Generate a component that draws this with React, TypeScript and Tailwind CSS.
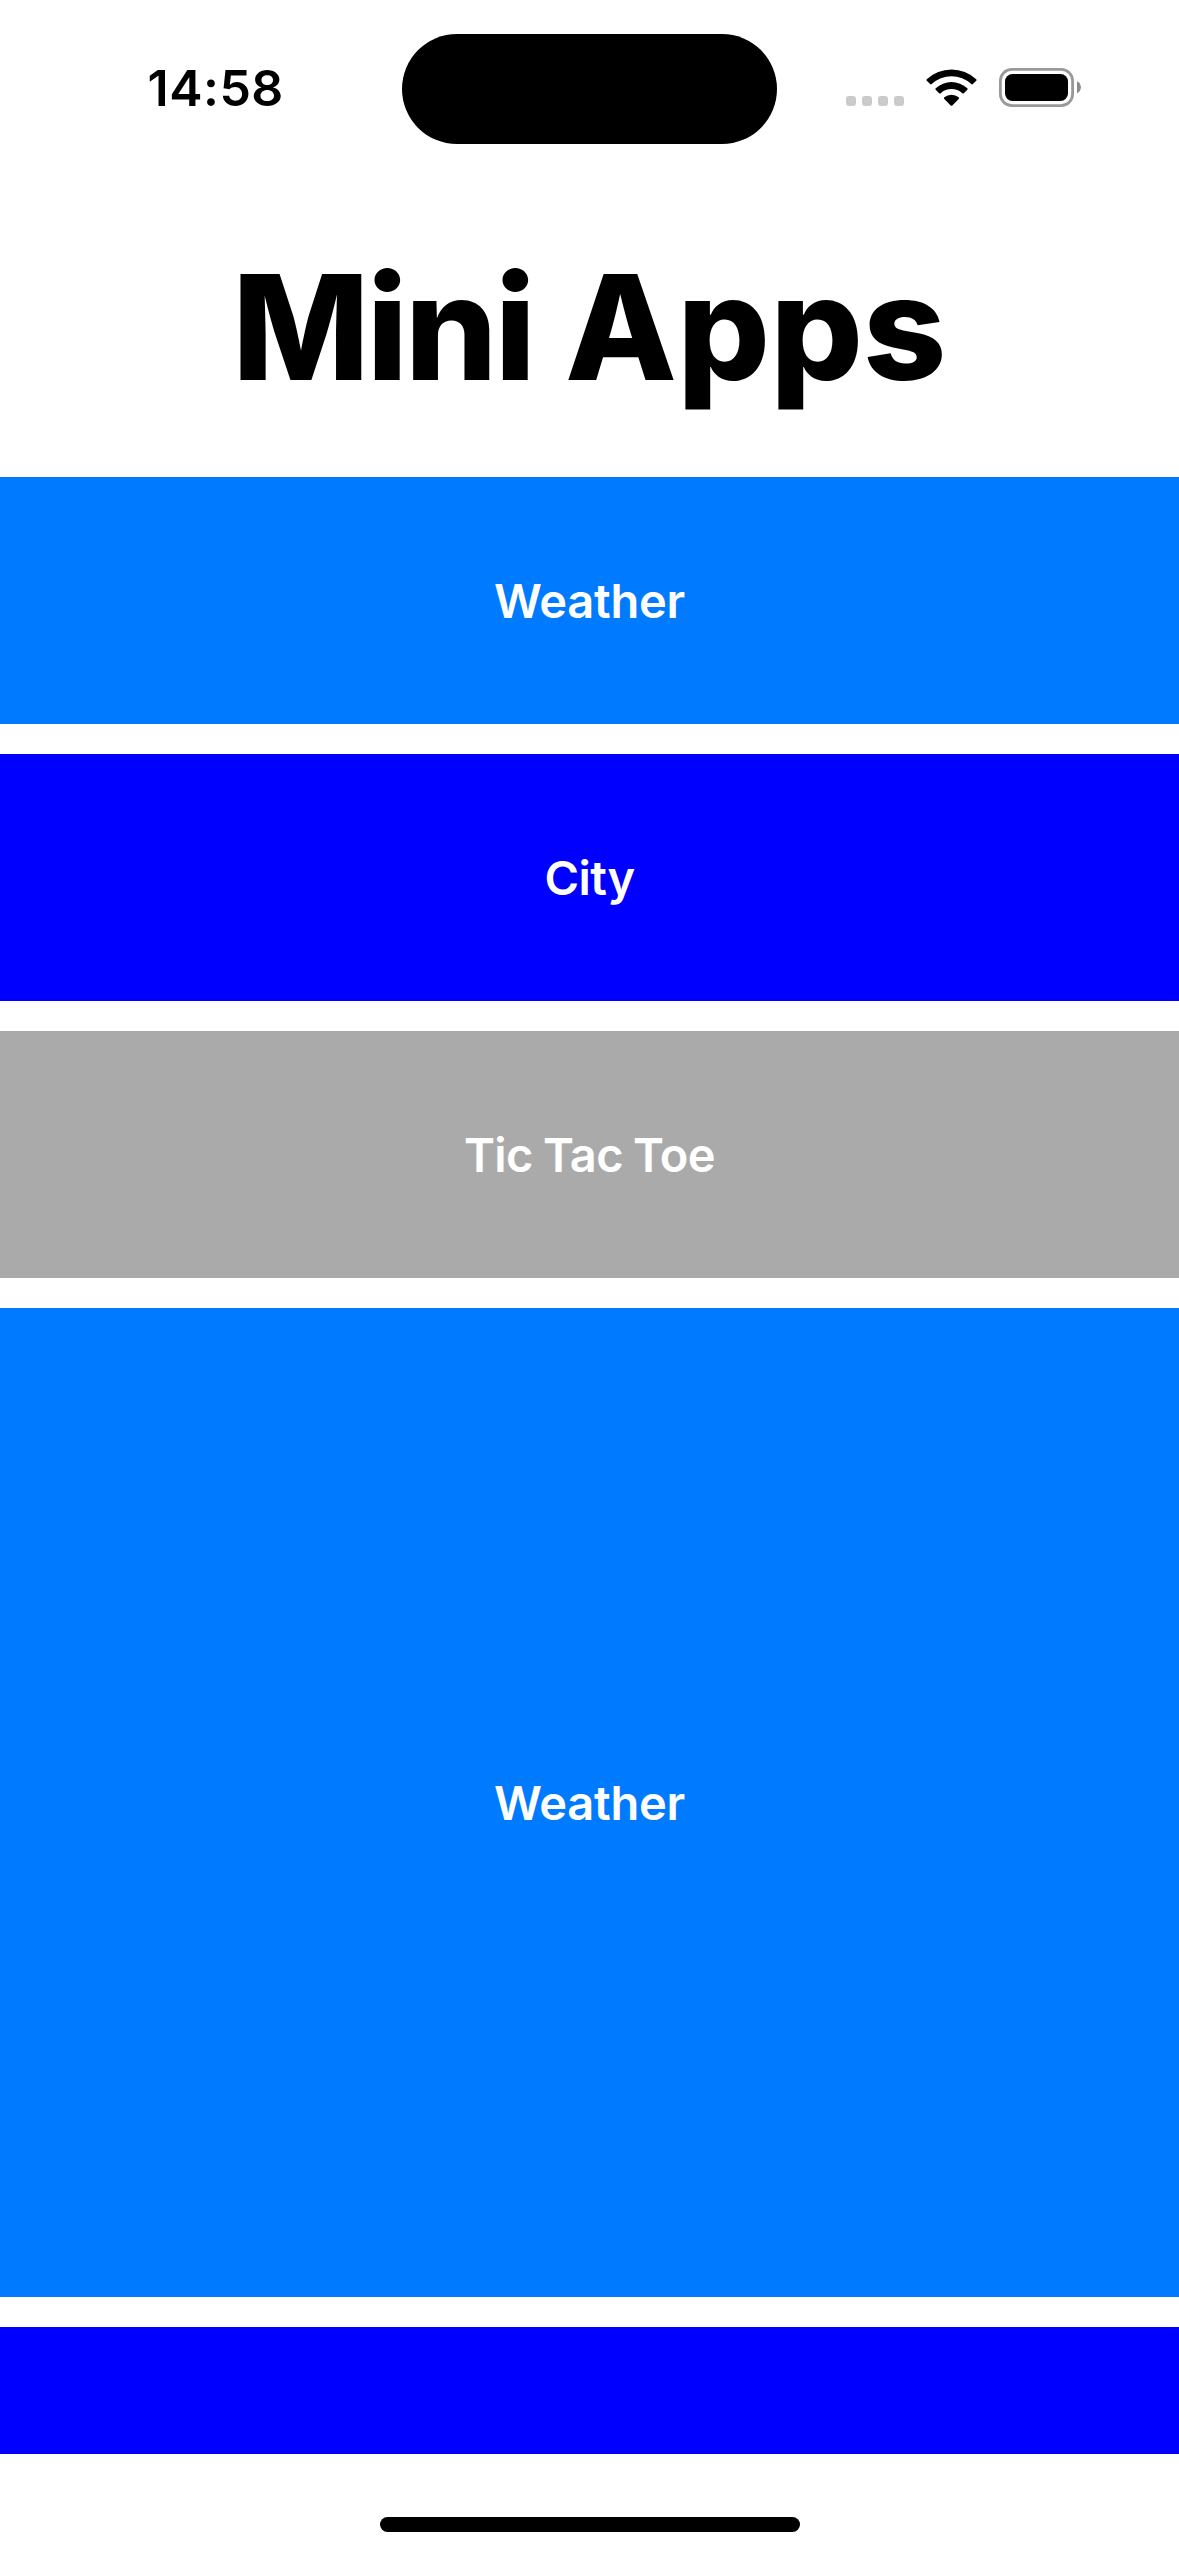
const tiles = [
  { label: "Weather", style: "h-[247px] bg-[#007aff] tracking-[-0.25px]" },
  { label: "City", style: "h-[247px] bg-[#0000ff] tracking-[-0.5px]" },
  { label: "Tic Tac Toe", style: "h-[247px] bg-[#aaaaaa] tracking-[-0.6px] [word-spacing:-1.2px]" },
  { label: "Weather", style: "h-[989px] bg-[#007aff] tracking-[-0.25px]" },
];

function StatusIcons() {
  return (
    <svg className="h-[44px] w-[240px]" viewBox="842 66 240 44">
      <g fill="#cbcbcb">
        <rect x="846" y="96" width="10" height="10" rx="3" />
        <rect x="862" y="96" width="10" height="10" rx="3" />
        <rect x="878" y="96" width="10" height="10" rx="3" />
        <rect x="894" y="96" width="10" height="10" rx="3" />
      </g>
      <path d="M926.8 79.2a36 36 0 0 1 49.4 0q.8.8 0 1.6l-3.3 3.3q-.8.7-1.6 0a29 29 0 0 0-39.6 0q-.8.7-1.6 0l-3.3-3.3q-.8-.8 0-1.6z" />
      <path d="M935.7 88.2a23.5 23.5 0 0 1 31.6 0q.8.8 0 1.6l-3.4 3.4q-.8.7-1.6 0a16.3 16.3 0 0 0-21.6 0q-.8.7-1.6 0l-3.4-3.4q-.8-.8 0-1.6z" />
      <path d="M944.3 97.3a11.5 11.5 0 0 1 14.4 0q.9.8 0 1.7l-6.4 6.4q-.8.8-1.6 0l-6.4-6.4q-.9-.9 0-1.7z" />
      <rect x="1000.4" y="69.4" width="72.2" height="36.2" rx="11.5" fill="none" stroke="#999" strokeWidth="2.8" />
      <rect x="1005" y="74" width="63" height="27" rx="7.5" />
      <path d="M1077 81.3c5.2 2 5.2 10 0 12z" fill="#8c8c8c" />
    </svg>
  );
}

export default function App() {
  return (
    <main className="flex h-[2556px] w-[1179px] flex-col overflow-hidden bg-white font-['Inter',sans-serif] text-black">
      <header className="flex h-[177px] shrink-0">
        <div className="w-[402px] pt-[57px] pl-[147.5px] text-[50px] leading-[62px] font-semibold tracking-[0.5px]">14:58</div>
        <div className="mt-[33.5px] h-[110.5px] w-[375px] rounded-full bg-black" />
        <div className="pt-[66px] pl-[65px]"><StatusIcons /></div>
      </header>
      <h1 className="h-[300px] shrink-0 pt-[60px] text-center text-[145.5px] leading-[180px] font-extrabold">
        <span className="tracking-[-2.8px]">Mini</span> <span className="tracking-[0.2px]">Apps</span>
      </h1>
      <section className="flex h-[1977px] shrink-0 flex-col gap-[30px] overflow-hidden">
        {tiles.map((tile, i) => (
          <button key={i} className={`flex w-full shrink-0 items-center justify-center pt-[2px] text-[47px] font-semibold text-white ${tile.style}`}>
            {tile.label}
          </button>
        ))}
        <div className="h-[247px] shrink-0 bg-[#0000ff]" />
      </section>
      <footer className="flex grow justify-center pt-[63px]">
        <div className="h-[15px] w-[420px] rounded-full bg-black" />
      </footer>
    </main>
  );
}
